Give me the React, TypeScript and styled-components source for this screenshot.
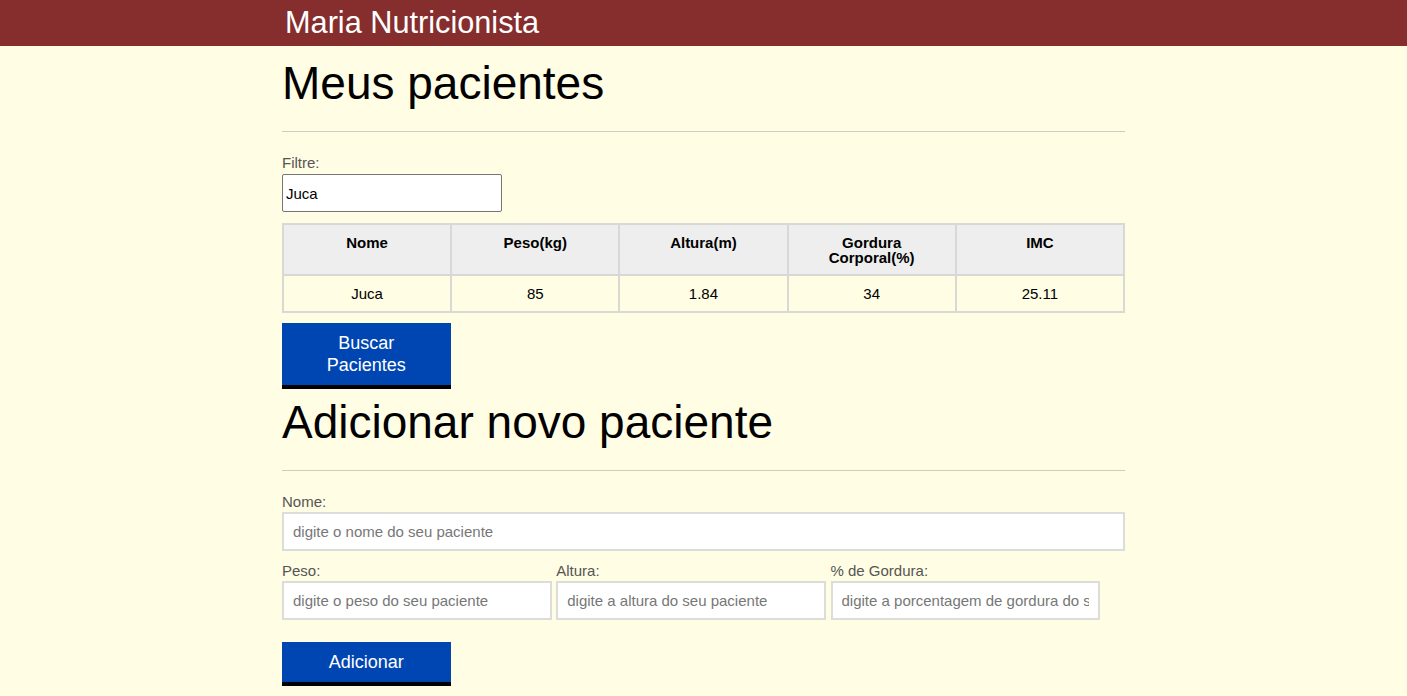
import React from "react";
import styled, { createGlobalStyle } from "styled-components";

const GlobalStyle = createGlobalStyle`
  body {
    margin: 0;
    background: #fffde3;
    font-family: "Liberation Sans", Arial, sans-serif;
    color: #000;
  }
  * {
    box-sizing: border-box;
  }
`;

const Header = styled.header`
  background: #862d2d;
  height: 46px;
`;

const Container = styled.div`
  width: 843px;
  margin: 0 auto;
`;

const Brand = styled.h1`
  margin: 0;
  padding-left: 3px;
  font-size: 30.7px;
  font-weight: normal;
  line-height: 46px;
  color: #fff;
`;

const Title = styled.h2<{ $top: number }>`
  margin: ${(p) => p.$top}px 0 0;
  font-size: 46px;
  font-weight: normal;
  line-height: 53px;
`;

const Rule = styled.hr`
  margin: 21px 0 22px;
  border: 0;
  border-top: 1px solid #cfcdc0;
  height: 0;
`;

const Label = styled.label`
  display: block;
  font-size: 15px;
  line-height: 17px;
  color: #555;
`;

const FilterInput = styled.input`
  display: block;
  width: 220px;
  height: 38px;
  margin-top: 3px;
  padding: 1px 3px;
  font: 15px "Liberation Sans", Arial, sans-serif;
  border: 1px solid #767676;
  border-radius: 2px;
  background: #fff;
`;

const Table = styled.table`
  width: 100%;
  margin-top: 11px;
  border-collapse: collapse;
  table-layout: fixed;
  font-size: 15px;
`;

const Th = styled.th`
  background: #eee;
  border: 2px solid #d8d8d4;
  padding: 10px 10px 9px;
  line-height: 15px;
  font-weight: bold;
  vertical-align: top;
  text-align: center;
`;

const Td = styled.td`
  border: 2px solid #d8d8d4;
  padding: 9px 10px 9px;
  line-height: 17px;
  text-align: center;
`;

const Button = styled.button<{ $top: number }>`
  display: block;
  width: 20%;
  margin-top: ${(p) => p.$top}px;
  padding: 9px 10px;
  border: 0;
  border-bottom: 4px solid #000;
  background: #0046b3;
  color: #fff;
  font: 18px/22px "Liberation Sans", Arial, sans-serif;
  text-align: center;
  cursor: pointer;
`;

const Field = styled.div`
  margin-bottom: 11px;
`;

const TextInput = styled.input`
  display: block;
  width: 100%;
  height: 39px;
  margin-top: 2px;
  padding: 0 9px;
  font: 15px "Liberation Sans", Arial, sans-serif;
  border: 2px solid #dcdcd8;
  background: #fff;
  &::placeholder {
    color: #777;
  }
`;

const Row = styled.div`
  display: flex;
  gap: 4.5px;
`;

const Col = styled.div`
  width: 32%;
`;

const pacientes = [
  { nome: "Juca", peso: 85, altura: 1.84, gordura: 34, imc: "25.11" },
];

export default function App() {
  return (
    <>
      <GlobalStyle />
      <Header>
        <Container>
          <Brand>Maria Nutricionista</Brand>
        </Container>
      </Header>
      <Container>
        <Title $top={11}>Meus pacientes</Title>
        <Rule />
        <Label htmlFor="filtro">Filtre:</Label>
        <FilterInput id="filtro" defaultValue="Juca" />
        <Table>
          <thead>
            <tr>
              <Th>Nome</Th>
              <Th>Peso(kg)</Th>
              <Th>Altura(m)</Th>
              <Th>
                Gordura
                <br />
                Corporal(%)
              </Th>
              <Th>IMC</Th>
            </tr>
          </thead>
          <tbody>
            {pacientes.map((p) => (
              <tr key={p.nome}>
                <Td>{p.nome}</Td>
                <Td>{p.peso}</Td>
                <Td>{p.altura}</Td>
                <Td>{p.gordura}</Td>
                <Td>{p.imc}</Td>
              </tr>
            ))}
          </tbody>
        </Table>
        <Button $top={10}>
          Buscar
          <br />
          Pacientes
        </Button>

        <Title $top={7}>Adicionar novo paciente</Title>
        <Rule />
        <form onSubmit={(e) => e.preventDefault()}>
          <Field>
            <Label htmlFor="nome">Nome:</Label>
            <TextInput id="nome" placeholder="digite o nome do seu paciente" />
          </Field>
          <Row>
            <Col>
              <Label htmlFor="peso">Peso:</Label>
              <TextInput id="peso" placeholder="digite o peso do seu paciente" />
            </Col>
            <Col>
              <Label htmlFor="altura">Altura:</Label>
              <TextInput
                id="altura"
                placeholder="digite a altura do seu paciente"
              />
            </Col>
            <Col>
              <Label htmlFor="gordura">% de Gordura:</Label>
              <TextInput
                id="gordura"
                placeholder="digite a porcentagem de gordura do seu paciente"
              />
            </Col>
          </Row>
          <Button $top={22} type="submit">
            Adicionar
          </Button>
        </form>
      </Container>
    </>
  );
}
